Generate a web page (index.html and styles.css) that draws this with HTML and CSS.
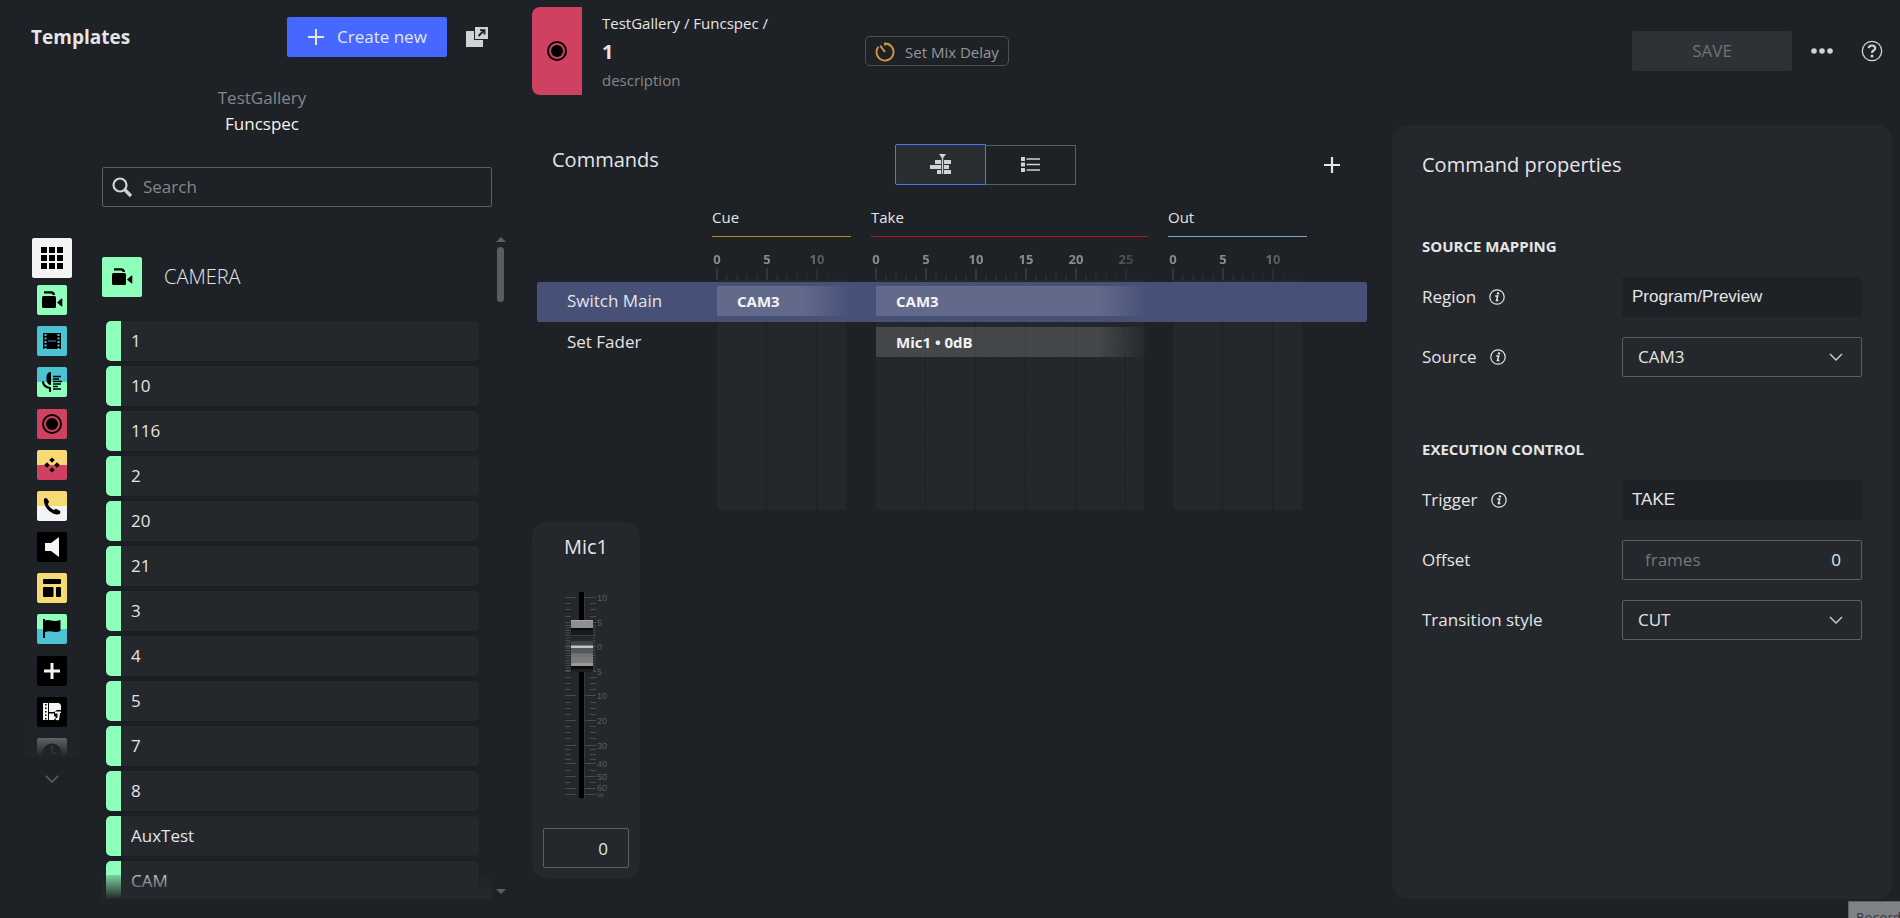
FILE: index.html
```html
<!DOCTYPE html>
<html lang="en">
<head>
<meta charset="utf-8">
<title>Templates</title>
<link rel="stylesheet" href="styles.css">
</head>
<body>
<svg class="sprite" aria-hidden="true">
  <symbol id="i-camera" viewBox="0 0 22 22">
    <rect x="1" y="7" width="14" height="12" rx="1.5"/>
    <path d="M16 13.5 20.500 9.500Q21.300 9.300 21.300 10.300V16.700Q21.300 17.700 20.500 17.400Z"/>
    <path d="M3 3.400H10Q12.800 3.600 12.800 6" fill="none" stroke="#000" stroke-width="2.400"/>
  </symbol>
  <symbol id="i-record" viewBox="0 0 22 22">
    <circle cx="11" cy="11" r="9" fill="none" stroke="#000" stroke-width="2"/>
    <circle cx="11" cy="11" r="6"/>
  </symbol>
  <symbol id="i-info" viewBox="0 0 16 16">
    <circle cx="8" cy="8" r="7.200" fill="none" stroke="currentColor" stroke-width="1.200"/>
    <circle cx="9" cy="4.400" r="1.200" fill="currentColor"/>
    <path d="M6.200 7H8.700L7.500 11.600H9.400" fill="none" stroke="currentColor" stroke-width="1.500"/>
  </symbol>
</svg>
<div class="app">
  <aside class="templates">
    <header class="templates-head">
      <h1 class="templates-title">Templates</h1>
      <button class="btn-create" type="button">
        <svg width="16" height="16" viewBox="0 0 16 16"><path d="M8 0V16M0 8H16" stroke="currentColor" stroke-width="2"/></svg>
        Create new
      </button>
      <button class="btn-icon btn-popout" type="button" aria-label="Open in new window">
        <svg width="22" height="20" viewBox="0 0 22 20"><path d="M0 4H8V13H17V20H0Z" fill="#d0d2d5"/><rect x="9" y="0" width="13" height="12" fill="#d0d2d5"/><path d="M12.500 9 18 3.500M14 3.200H18.500V7.500" fill="none" stroke="#1e2125" stroke-width="1.800"/></svg>
      </button>
    </header>
    <div class="gallery">
      <div class="gallery-name">TestGallery</div>
      <div class="gallery-group">Funcspec</div>
    </div>
    <label class="search">
      <svg width="21" height="21" viewBox="0 0 21 21" fill="none" stroke="#cfd1d3"><circle cx="8" cy="8" r="6.500" stroke-width="2.200"/><path d="M12.800 12.800 19 19" stroke-width="3.400"/></svg>
      <input class="search-input" type="text" placeholder="Search" aria-label="Search">
    </label>
    <div class="browser">
      <nav class="rail" aria-label="Template types">
        <div class="rail-clip">
        <div class="rail-items">
          <button class="cat cat-all" type="button" aria-label="All"><svg width="22" height="22" viewBox="0 0 22 22"><path d="M0 0h6v6H0zM8 0h6v6H8zM16 0h6v6h-6zM0 8h6v6H0zM8 8h6v6H8zM16 8h6v6h-6zM0 16h6v6H0zM8 16h6v6H8zM16 16h6v6h-6z"/></svg></button>
          <button class="cat green" type="button" aria-label="Camera"><svg width="22" height="22"><use href="#i-camera"/></svg></button>
          <button class="cat cyan" type="button" aria-label="Video"><svg width="18" height="16" viewBox="0 0 18 16"><rect width="18" height="16"/><path d="M2.500 1V16M15.500 1V16" stroke="#4bc3d3" stroke-width="2" stroke-dasharray="2 1.500"/><path d="M5 8H13" stroke="#2d5da0" stroke-width="1.500"/></svg></button>
          <button class="cat cyan-green" type="button" aria-label="Voice over"><svg width="20" height="20" viewBox="0 0 20 20"><path d="M9 0V13Q5 13 4.500 8V4.500Q5 0 9 0Z"/><path d="M.8 9.500Q1.500 15 8 16V20" fill="none" stroke="#000" stroke-width="2"/><path d="M11 4.500h8M11 7h6M11 9.500h9M11 12h8M11 14.500h5M11 17h8" stroke="#000" stroke-width="1.300"/></svg></button>
          <button class="cat red" type="button" aria-label="Mix"><svg width="22" height="22"><use href="#i-record"/></svg></button>
          <button class="cat yellow-red" type="button" aria-label="Combo"><svg width="16" height="16" viewBox="0 0 16 16"><path d="M8 .5 10.800 3 8 5.800 5.200 3ZM8 10.200 10.800 13 8 15.500 5.200 13ZM3 5.200 5.800 8 3 10.800.2 8ZM13 5.200 15.800 8 13 10.800 10.200 8Z"/></svg></button>
          <button class="cat yellow-white" type="button" aria-label="Telephone"><svg width="18" height="18" viewBox="0 0 18 18"><path d="M1 2Q2.500.5 4 1.500L6 4.500Q6 5.500 4.800 7 6 10.500 11 13L13 11.800 17.200 14V16.500Q15 18 11 17 2 13 1 5Z"/></svg></button>
          <button class="cat black" type="button" aria-label="Audio"><svg width="14" height="20" viewBox="0 0 14 20"><path d="M0 6H6L14 0V20L6 14H0Z" fill="#f3f3f4"/></svg></button>
          <button class="cat yellow" type="button" aria-label="Layout"><svg width="18" height="18" viewBox="0 0 18 18"><rect width="18" height="5" rx="1"/><rect y="8" width="10.500" height="10" rx="1"/><rect x="13" y="8" width="5" height="10" rx="1"/></svg></button>
          <button class="cat green-cyan" type="button" aria-label="Marker"><svg width="18" height="20" viewBox="0 0 18 20"><path d="M1 0V19" stroke="#000" stroke-width="2"/><path d="M1 2Q4 .5 8 1.500T17.500 1V12Q13 13.500 9 12.500T1 13.500Z"/></svg></button>
          <button class="cat black" type="button" aria-label="Add"><svg width="16" height="16" viewBox="0 0 16 16"><path d="M8 0V16M0 8H16" stroke="#f3f3f4" stroke-width="3"/></svg></button>
          <button class="cat black" type="button" aria-label="Media"><svg width="19" height="19" viewBox="0 0 19 19"><path d="M0 1H5V18H0ZM6 1H16L18 3V8H14L11 10H6ZM6 11.500H11V14L13 15 11 18H6ZM12 9.500H18V11H17L16 18Q12 19 12.500 16.500L14.500 15.500V11.500H12Z" fill="#f3f3f4"/><path d="M2.800 2V18" stroke="#000" stroke-width="1.500" stroke-dasharray="1.500 2"/></svg></button>
          <button class="cat gray" type="button" aria-label="Timer"><svg width="20" height="20" viewBox="0 0 20 20"><circle cx="10" cy="10" r="9.500" fill="#1e2125"/><path d="M10 3V10H14" fill="none" stroke="#8a8c8e" stroke-width="1.800"/></svg></button>
        </div>
        </div>
        <button class="btn-icon rail-more" type="button" aria-label="More"><svg width="14" height="8" viewBox="0 0 14 8"><path d="M.7.7 7 7 13.300.7" fill="none" stroke="#5c5e61" stroke-width="1.600"/></svg></button>
      </nav>
      <section class="list">
        <h2 class="list-head"><span class="list-icon green"><svg width="22" height="22"><use href="#i-camera"/></svg></span>CAMERA</h2>
        <ul class="items">
          <li class="item">1</li><li class="item">10</li><li class="item">116</li><li class="item">2</li><li class="item">20</li><li class="item">21</li><li class="item">3</li><li class="item">4</li><li class="item">5</li><li class="item">7</li><li class="item">8</li><li class="item">AuxTest</li><li class="item">CAM</li>
        </ul>
      </section>
      <div class="scrollbar" aria-hidden="true"><span class="arrow-up"></span><span class="thumb"></span><span class="arrow-down"></span></div>
    </div>
  </aside>

  <main class="main">
    <header class="head">
      <div class="head-badge"><svg width="22" height="22"><use href="#i-record"/></svg></div>
      <div class="head-info">
        <div class="crumbs">TestGallery / Funcspec /</div>
        <div class="head-name">1</div>
        <div class="head-desc">description</div>
      </div>
      <button class="btn-delay" type="button">
        <svg width="20" height="20" viewBox="0 0 20 20" fill="none" stroke="#d69a3c" stroke-width="1.800"><path d="M10 1.500A8.500 8.500 0 1 1 3.300 4.800M10 10 5.200 3.600M10 .600V3.600M14.500 1.500 13.500 3.500"/></svg>
        Set Mix Delay
      </button>
      <div class="head-actions">
        <button class="btn-save" type="button" disabled>SAVE</button>
        <button class="btn-icon" type="button" aria-label="More"><svg width="22" height="6" viewBox="0 0 22 6" fill="#d0d2d5"><circle cx="3" cy="3" r="2.800"/><circle cx="11" cy="3" r="2.800"/><circle cx="19" cy="3" r="2.800"/></svg></button>
        <button class="btn-icon" type="button" aria-label="Help"><svg width="22" height="22" viewBox="0 0 22 22"><circle cx="11" cy="11" r="9.700" fill="none" stroke="#d0d2d5" stroke-width="1.300"/><path d="M7.800 8.200Q8 5.500 11 5.500T14.200 8.200Q14.200 9.500 12.500 10.500 11 11.400 11 13" fill="none" stroke="#d0d2d5" stroke-width="2.200"/><circle cx="11" cy="16" r="1.500" fill="#d0d2d5"/></svg></button>
      </div>
    </header>

    <div class="work">
      <section class="commands">
        <div class="commands-head">
          <h2 class="panel-title">Commands</h2>
          <div class="toggle">
            <button class="toggle-btn is-active" type="button" aria-label="Timeline view"><svg width="22" height="21" viewBox="0 0 22 21" fill="#d0d2d5"><path d="M5 6h6v4H5zM14 6h7v4h-7zM0 11h11v4H0zM14 11h5v4h-5zM7 16h4v4H7zM14 16h7v4h-7zM9 0h7l-2.800 4v16h-1.400V4z"/></svg></button>
            <button class="toggle-btn" type="button" aria-label="List view"><svg width="19" height="15" viewBox="0 0 19 15" fill="#d0d2d5"><path d="M0 0h4v4H0zM0 5.500h4v4H0zM0 11h4v4H0zM5.500 1.200H19v1.500H5.500zM5.500 6.700H19v1.500H5.500zM5.500 12.200H19v1.500H5.500z"/></svg></button>
          </div>
          <button class="btn-icon add-command" type="button" aria-label="Add command"><svg width="16" height="16" viewBox="0 0 16 16"><path d="M8 0V16M0 8H16" stroke="#e3e4e6" stroke-width="2.200"/></svg></button>
        </div>

        <div class="timeline">
          <div class="phase cue">Cue</div>
          <div class="phase take">Take</div>
          <div class="phase out">Out</div>
          <div class="ruler cue"><span>0</span><span>5</span><span>10</span></div>
          <div class="ruler take"><span>0</span><span>5</span><span>10</span><span>15</span><span>20</span><span>25</span></div>
          <div class="ruler out"><span>0</span><span>5</span><span>10</span></div>
          <div class="track cue"></div>
          <div class="track take"></div>
          <div class="track out"></div>
          <div class="rows">
            <div class="row is-selected"><span class="row-name">Switch Main</span><span class="clip cue">CAM3</span><span class="clip take">CAM3</span></div>
            <div class="row"><span class="row-name">Set Fader</span><span class="clip take">Mic1 • 0dB</span></div>
          </div>
        </div>

        <div class="mic">
          <h3 class="mic-name">Mic1</h3>
          <div class="fader">
            <svg class="scale" width="46" height="208" viewBox="0 0 46 208">
              <g stroke="#484b4e" stroke-width="1">
                <path d="M2 6.500h11M21 6.500h12M2 31.500h11M21 31.500h12M2 55.500h11M21 55.500h12M2 80.500h11M21 80.500h12M2 104.500h11M21 104.500h12M2 129.500h11M21 129.500h12M2 154.500h11M21 154.500h12M2 172.500h11M21 172.500h12M2 185.500h11M21 185.500h12M2 197.500h11M21 197.500h12M2 203.500h11M21 203.500h12"/>
                <path d="M2 12.500h6M27 12.500h6M2 18.500h6M27 18.500h6M2 25.500h6M27 25.500h6M2 86.500h6M27 86.500h6M2 92.500h6M27 92.500h6M2 98.500h6M27 98.500h6M2 111.500h6M27 111.500h6M2 117.500h6M27 117.500h6M2 123.500h6M27 123.500h6M2 135.500h6M27 135.500h6M2 141.500h6M27 141.500h6M2 147.500h6M27 147.500h6M2 158.500h6M27 158.500h6M2 163.500h6M27 163.500h6M2 168.500h6M27 168.500h6M2 179.500h6M27 179.500h6M2 191.500h6M27 191.500h6"/>
                <path d="M5 34V80M30 34V80" stroke-width="5" stroke-dasharray="1 1.500"/>
              </g>
              <g class="scale-text"><text x="34" y="10">10</text><text x="34" y="35">5</text><text x="34" y="59">0</text><text x="34" y="84">5</text><text x="34" y="108">10</text><text x="34" y="133">20</text><text x="34" y="158">30</text><text x="34" y="176">40</text><text x="34" y="189">50</text><text x="34" y="200">60</text><text x="34" y="207">∞</text></g>
            </svg>
            <input class="fader-input" type="range" min="-45" max="10" value="0" aria-label="Mic1 level">
          </div>
          <input class="mic-value" type="text" value="0" aria-label="Mic1 value">
        </div>
      </section>

      <section class="props">
        <h2 class="panel-title">Command properties</h2>
        <h3 class="props-section">SOURCE MAPPING</h3>
        <div class="fields">
          <label for="region">Region<svg width="16" height="16"><use href="#i-info"/></svg></label>
          <input class="readonly" id="region" type="text" value="Program/Preview" readonly>
          <label for="source">Source<svg width="16" height="16"><use href="#i-info"/></svg></label>
          <div class="select"><select id="source"><option>CAM3</option></select><svg width="14" height="8" viewBox="0 0 14 8"><path d="M1 1 7 7 13 1" fill="none" stroke="#d0d2d5" stroke-width="1.400"/></svg></div>
        </div>
        <h3 class="props-section">EXECUTION CONTROL</h3>
        <div class="fields">
          <label for="trigger">Trigger<svg width="16" height="16"><use href="#i-info"/></svg></label>
          <input class="readonly" id="trigger" type="text" value="TAKE" readonly>
          <label for="offset">Offset</label>
          <div class="number"><span class="unit">frames</span><input id="offset" type="text" value="0"></div>
          <label for="transition">Transition style</label>
          <div class="select"><select id="transition"><option>CUT</option></select><svg width="14" height="8" viewBox="0 0 14 8"><path d="M1 1 7 7 13 1" fill="none" stroke="#d0d2d5" stroke-width="1.400"/></svg></div>
        </div>
      </section>
    </div>
  </main>
</div>
<div class="status-tip">Recorder</div>
</body>
</html>
```
FILE: styles.css
```css
:root {
  --bg: #1e2125;
  --panel: #24272b;
  --text: #e4e5e7;
  --muted: #85878a;
  --line: #5c5f61;
  --green: #8fffbc;
  --cyan: #4bc3d3;
  --red: #d04060;
  --yellow: #f8da74;
}

* { box-sizing: border-box; }

body {
  margin: 0;
  background: var(--bg);
  color: var(--text);
  font: 17px/24px "Open Sans", "Noto Sans", sans-serif;
}

h1, h2, h3, ul { margin: 0; padding: 0; font-weight: 400; }
ul { list-style: none; }
button, input, select { font: inherit; color: inherit; margin: 0; }
button { border: 0; padding: 0; background: none; }
svg { display: block; flex: none; }

.sprite { position: absolute; width: 0; height: 0; }

.app { display: flex; height: 100vh; overflow: hidden; }

.btn-icon {
  display: flex;
  align-items: center;
  justify-content: center;
  width: 40px;
  height: 40px;
}

/* Templates panel */
.templates {
  flex: none;
  display: flex;
  flex-direction: column;
  width: 512px;
  padding: 17px 7px 19px 25px;
}

.templates-head { display: flex; align-items: center; margin-right: -2px; padding-left: 6px; }
.templates-title { flex: 1; font-size: 19px; font-weight: 700; }

.btn-create {
  display: flex;
  align-items: center;
  gap: 13px;
  width: 160px;
  height: 40px;
  padding-left: 21px;
  border-radius: 2px;
  background: #4668ff;
}
.btn-popout { width: 60px; }

.gallery { width: 474px; padding-top: 28px; text-align: center; line-height: 26px; }
.gallery-name { color: var(--muted); }
.gallery-group { color: #f3f3f4; }

.search {
  display: flex;
  align-items: center;
  gap: 8px;
  height: 40px;
  margin: 30px 13px 0 77px;
  padding-left: 9px;
  border: 1px solid var(--line);
  border-radius: 2px;
}
.search-input { flex: 1; min-width: 0; padding: 0 2px; border: 0; background: none; outline: 0; }
.search-input::placeholder { color: var(--muted); opacity: 1; }

.browser { flex: 1; display: flex; min-height: 0; padding-top: 30px; }

.rail { flex: none; width: 55px; }
.rail-clip {
  position: relative;
  height: 519px;
  margin-left: -1px;
  padding-top: 1px;
  overflow: hidden;
}
.rail-clip::after {
  content: "";
  position: absolute;
  inset: auto 0 0;
  height: 34px;
  background: linear-gradient(rgb(36 39 41 / 0), #212427);
}
.rail-items {
  display: flex;
  flex-direction: column;
  align-items: center;
  justify-content: space-between;
  height: 530px;
}
.cat {
  flex: none;
  display: flex;
  align-items: center;
  justify-content: center;
  width: 30px;
  height: 30px;
  border-radius: 2px;
}
.cat-all { width: 40px; height: 40px; margin-bottom: -4px; background: #f3f3f4; }
.rail-more { width: 53px; margin-top: 3px; }

.green { background: var(--green); }
.cyan { background: var(--cyan); }
.red { background: var(--red); }
.yellow { background: var(--yellow); }
.black { background: #000; }
.gray { background: #9a9c9e; }
.cyan-green { background: linear-gradient(var(--cyan) 50%, var(--green) 50%); }
.green-cyan { background: linear-gradient(var(--green) 50%, var(--cyan) 50%); }
.yellow-red { background: linear-gradient(var(--yellow) 50%, var(--red) 50%); }
.yellow-white { background: linear-gradient(var(--yellow) 50%, #f3f3f4 50%); }

.list {
  position: relative;
  flex: 1;
  margin-left: 22px;
  padding-top: 20px;
  overflow: hidden;
}
.list::after {
  content: "";
  position: absolute;
  inset: auto 0 0;
  height: 24px;
  background: linear-gradient(rgb(36 39 43 / 20%), #24272b);
}
.list-head { display: flex; align-items: center; gap: 22px; font-size: 20px; font-weight: 300; }
.list-icon {
  display: flex;
  align-items: center;
  justify-content: center;
  width: 40px;
  height: 40px;
  border-radius: 2px;
}
.items { display: grid; gap: 5px; padding: 24px 13px 0 4px; }
.item {
  height: 40px;
  padding-left: 10px;
  border-left: 15px solid var(--green);
  border-radius: 5px;
  background: var(--panel);
  line-height: 40px;
  box-shadow: 0 0 5px rgb(0 0 0 / 12%);
}

.scrollbar { display: flex; flex-direction: column; align-items: center; width: 17px; margin-right: -4px; padding-bottom: 5px; }
.arrow-up, .arrow-down { border: 5px solid transparent; }
.arrow-up { border-top: 0; border-bottom-color: #5c5e61; }
.arrow-down { margin-top: auto; border-bottom: 0; border-top-color: #5c5e61; }
.thumb { width: 7px; height: 55px; margin-top: 5px; border-radius: 4px; background: #5a5c60; }

/* Header */
.main {
  flex: 1;
  display: flex;
  flex-direction: column;
  gap: 30px;
  min-width: 0;
  padding: 7px 8px 19px 20px;
}
.head { display: flex; align-items: center; height: 88px; }
.head-badge {
  display: flex;
  align-items: center;
  justify-content: center;
  align-self: stretch;
  width: 50px;
  border-radius: 8px 0 0 8px;
  background: var(--red);
}
.head-info { width: 283px; padding-left: 20px; font-size: 15px; line-height: 28px; }
.head-name { font-size: 20px; font-weight: 700; line-height: 30px; }
.head-desc { color: #85878a; line-height: 26px; }
.btn-delay {
  display: flex;
  align-items: center;
  gap: 10px;
  height: 30px;
  padding: 1px 9px 0;
  border: 1px solid #4b4e52;
  border-radius: 5px;
  color: #95979c;
  font-size: 15px;
}
.head-actions { display: flex; align-items: center; gap: 10px; margin-left: auto; }
.btn-save {
  width: 160px;
  height: 40px;
  border-radius: 2px;
  background: #2e3135;
  color: #707376;
}

/* Commands */
.work { flex: 1; display: flex; gap: 20px; min-height: 0; }
.panel-title { font-size: 20px; line-height: 32px; }
.commands { flex: 1; min-width: 0; padding-top: 19px; }
.commands-head { display: grid; grid-template-columns: 343px auto 1fr; height: 41px; padding: 0 20px; }
.add-command { justify-self: end; align-self: end; }
.toggle { display: flex; align-items: center; }
.toggle-btn {
  display: flex;
  align-items: center;
  justify-content: center;
  width: 90px;
  height: 40px;
  border: 1px solid var(--line);
  border-left: 0;
}
.toggle-btn.is-active { width: 91px; height: 41px; border: 1px solid #4a78f0; border-radius: 2px 0 0 2px; background: #2a2d31; }

.timeline {
  display: grid;
  grid-template-columns: 155px 139px 277px 139px 1fr;
  grid-template-rows: 30px 43px 230px;
  column-gap: 20px;
  margin: 22px 5px 12px;
}
.cue { grid-column: 2; }
.take { grid-column: 3; }
.out { grid-column: 4; }

.phase { grid-row: 1; border-bottom: 1px solid; font-size: 15px; line-height: 20px; }
.phase.cue { border-color: #b8901c; }
.phase.take { border-color: #b01616; }
.phase.out { border-color: #7ea6c4; }

.ruler {
  grid-row: 2;
  display: flex;
  margin-left: -20px;
  padding-top: 12px;
  color: #8a8c8e;
  font-size: 13px;
  font-weight: 700;
  line-height: 20px;
  background:
    repeating-linear-gradient(90deg, #34373a 0 2px, transparent 2px 50px) 24px 100% / 100% 12px no-repeat,
    repeating-linear-gradient(90deg, #292c2f 0 2px, transparent 2px 10px) 24px 100% / 100% 6px no-repeat;
  mask-image: linear-gradient(90deg, #000 calc(100% - 60px), rgb(0 0 0 / 10%));
}
.ruler span { width: 50px; flex: none; text-align: center; }

.track {
  grid-row: 3;
  margin: 0 4px 0 5px;
  background:
    repeating-linear-gradient(90deg, transparent 0 49px, #1f2225 49px 50px),
    radial-gradient(circle at 9px 5px, #1f2225 1px, transparent 1px) 0 0 / 10px 10px,
    var(--panel);
}
.rows {
  grid-area: 3 / 1 / 4 / -1;
  display: grid;
  grid-template-columns: subgrid;
  align-content: start;
  row-gap: 1px;
  padding-top: 2px;
}
.row {
  grid-column: 1 / -1;
  display: grid;
  grid-template-columns: subgrid;
  height: 40px;
  padding-top: 4px;
  border-radius: 2px;
}
.row.is-selected { background: #475077; }
.row-name { padding-left: 30px; line-height: 30px; }
.clip {
  grid-row: 1;
  height: 30px;
  margin-left: 5px;
  padding-left: 20px;
  background: linear-gradient(90deg, rgb(255 255 255 / 15%) calc(100% - 50px), rgb(255 255 255 / 0));
  color: #f3f3f4;
  font-size: 15px;
  font-weight: 700;
  line-height: 30px;
}

/* Fader strip */
.mic {
  display: flex;
  flex-direction: column;
  align-items: center;
  width: 108px;
  padding: 9px 11px 11px;
  border-radius: 15px;
  background: var(--panel);
}
.mic-name { font-size: 20px; line-height: 32px; }
.fader { display: grid; margin: 28px 0 29px; }
.scale { grid-area: 1 / 1; overflow: visible; }
.scale-text { fill: #5a5d60; font: 9px "Liberation Sans Narrow", "Liberation Sans", sans-serif; }
.fader-input {
  grid-area: 1 / 1;
  appearance: none;
  writing-mode: vertical-lr;
  direction: rtl;
  width: 22px;
  height: 206px;
  margin: 1px 0 0 8px;
  background: linear-gradient(90deg, transparent 8px, #000 8px 13px, #33363a 13px 14px, transparent 14px);
}
.fader-input::-webkit-slider-thumb {
  appearance: none;
  width: 22px;
  height: 52px;
  border: 0;
  border-radius: 0;
  background: linear-gradient(#a5a5a5 0 1px, #8f8f8f 1px 8px, #0a0b0b 8px 10px, #171a1c 10px 15px, #3a3d3f 15px 16px, #24272a 16px 21px, #404346 21px 25px, #c4c4c4 26px 28px, #55585a 28px 33px, #6f7676 34px 37px, #7b7b7c 38px 43px, #98989a 43px 46px, #0c0d0d 46px 49px, #1c1d1f 49px);
}
.mic-value {
  width: 100%;
  height: 40px;
  padding: 0 20px;
  border: 1px solid var(--line);
  border-radius: 2px;
  background: none;
  text-align: right;
}

/* Command properties */
.props {
  flex: none;
  width: 500px;
  padding: 24px 30px;
  border-radius: 15px;
  background: var(--panel);
}
.props-section { margin: 55px 0 21px; font-size: 15px; font-weight: 700; line-height: 20px; }
.fields + .props-section { margin-top: 62px; }
.fields { display: grid; grid-template-columns: 200px 1fr; grid-auto-rows: 40px; row-gap: 20px; }
.fields label { display: flex; align-items: center; gap: 13px; }
.readonly {
  min-width: 0;
  padding: 0 10px;
  border: 0;
  border-radius: 2px;
  background: var(--bg);
  font-family: "Liberation Sans", Arial, sans-serif;
}
.select, .number {
  display: grid;
  align-items: center;
  border: 1px solid var(--line);
  border-radius: 2px;
}
.select > * { grid-area: 1 / 1; }
.select svg { justify-self: end; margin-right: 18px; pointer-events: none; }
.select select { appearance: none; height: 38px; padding: 0 15px; border: 0; background: none; }
.number { grid-template-columns: auto 1fr; padding: 0 20px 0 22px; }
.number input { min-width: 0; padding: 0; border: 0; background: none; text-align: right; }
.unit { color: #76787b; }

.status-tip {
  position: fixed;
  left: calc(100% - 52px);
  top: calc(100% - 17px);
  padding: 6px 7px;
  border: 1px solid #606265;
  background: #808285;
  color: #3a3c3f;
  font: 13px/20px "DejaVu Sans", sans-serif;
  white-space: nowrap;
}
```
